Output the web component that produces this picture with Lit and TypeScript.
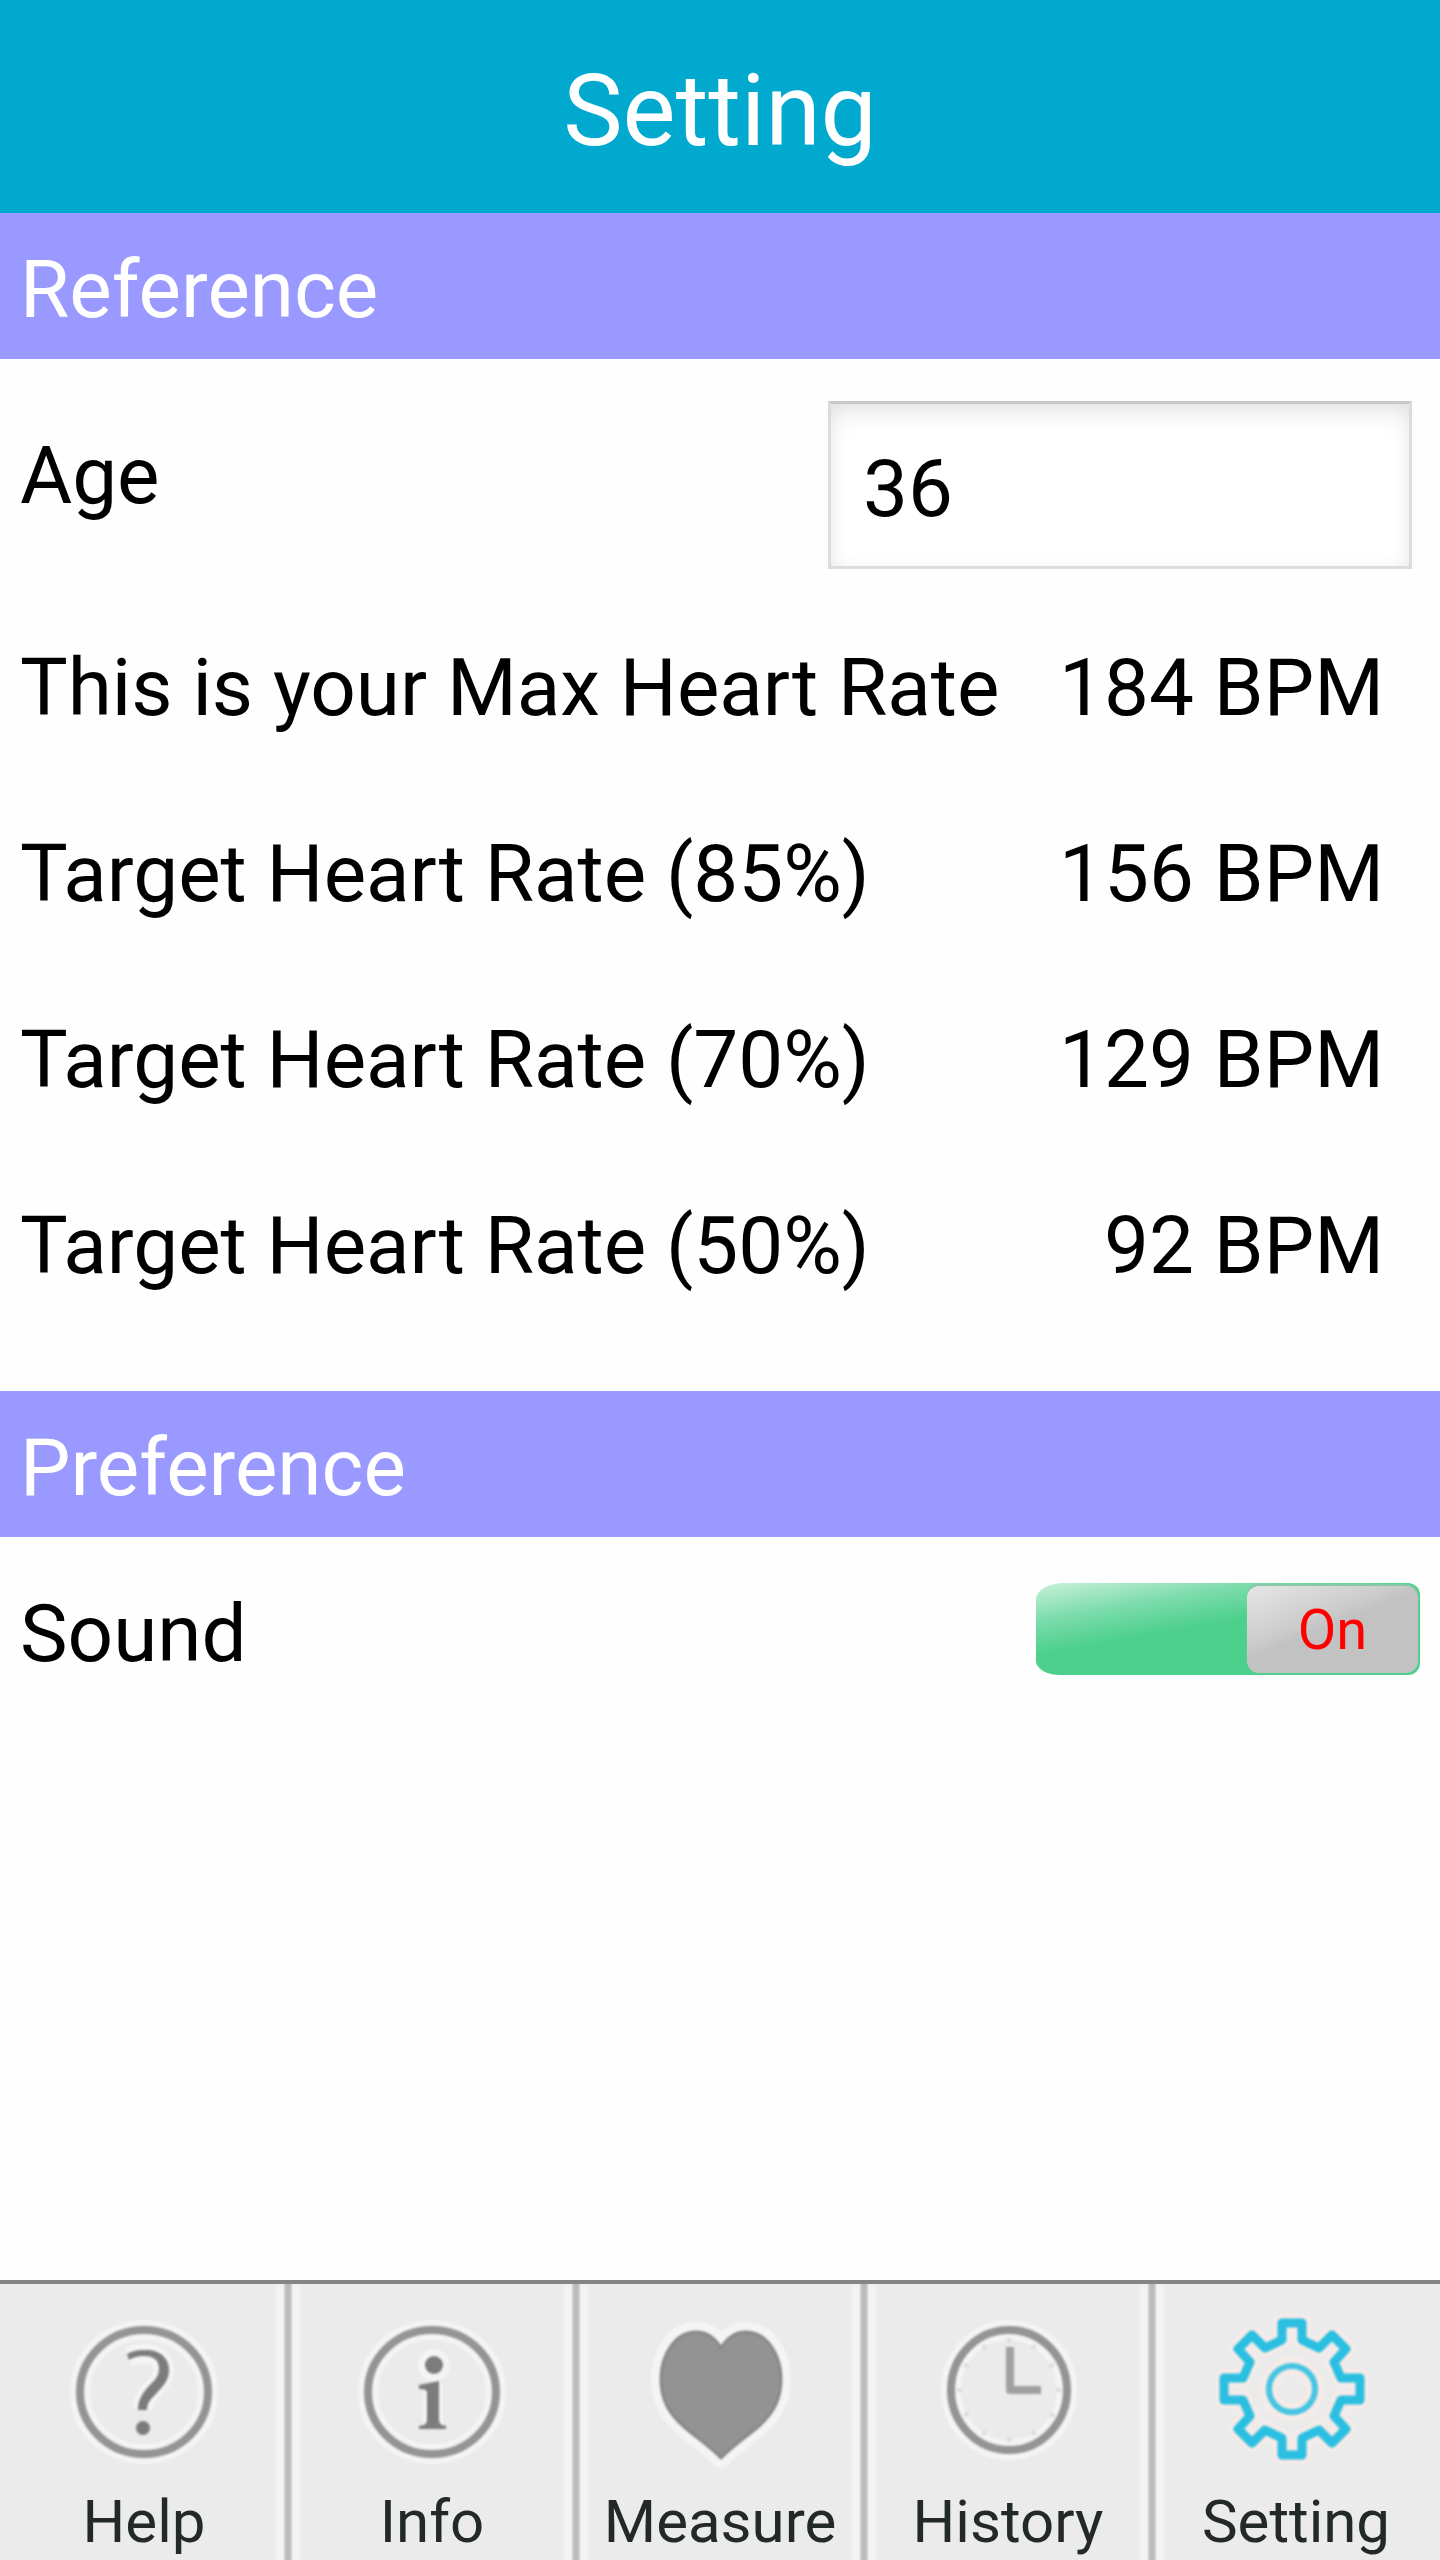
import { LitElement, html, svg, css } from "lit";
import { customElement, property, state } from "lit/decorators.js";
import { classMap } from "lit/directives/class-map.js";

type IconName = "help" | "info" | "measure" | "history" | "setting";

const GEAR =
  "M-10-66H10V-49L27-41L40-54L54-40L42-27L49-11H68V11H49L42 27L54 40L40 54L27 41L10 49V66H-10V49L-27 41L-40 54L-54 40L-42 27L-49 11H-68V-11H-49L-42-27L-54-40L-40-54L-27-41L-10-49Z";
const HEART =
  "M145 68C139 58 131 52 120 52C99 52 85 75 85 99C85 119 92 132 107 146C121 158 135 167 145 178C155 167 169 158 183 146C198 132 205 119 205 99C205 75 191 52 170 52C159 52 151 58 145 68Z";

const TICKS = [0, 30, 60, 90, 120, 150, 180, 210, 240, 270, 300, 330];

const icons = {
  help: svg`
    <ellipse class="halo" cx="144" cy="112" rx="64" ry="62"/>
    <ellipse class="ring" cx="144" cy="112" rx="64" ry="62"/>
    <path class="halo" d="M128 77C148 70 164 76 164 90C164 105 144 110 143 129"/>
    <path class="solid" d="M127 74C134 70 140 70 146 70C160 70 169 78 169 90C169 101 162 107 155 115C149 121 147 124 147 130H138C138 121 141 115 148 107C155 100 159 97 159 88C159 79 152 76 144 76C138 76 134 77 129 80Z"/>
    <circle class="solid" cx="143" cy="148" r="7"/>`,
  info: svg`
    <ellipse class="halo" cx="144" cy="112" rx="64" ry="62"/>
    <ellipse class="ring" cx="144" cy="112" rx="64" ry="62"/>
    <circle class="halo" cx="146" cy="85" r="6"/>
    <circle class="solid" cx="146" cy="85" r="9"/>
    <path class="halo" d="M145 104V146"/>
    <path class="solid" d="M131 105L151 101V139C151 144 153 145 158 146V149H131V146C137 145 139 144 139 139V113C139 110 137 109 131 109Z"/>`,
  measure: svg`
    <path class="halo" d=${HEART}/>
    <path class="heart" d=${HEART}/>`,
  history: svg`
    <ellipse class="halo" cx="145" cy="110" rx="58" ry="60"/>
    <ellipse class="ring" cx="145" cy="110" rx="58" ry="60"/>
    ${TICKS.map(
      (a) => svg`<path class="tick" d="M145 58V63" transform="rotate(${a} 145 110)"/>`
    )}
    <path class="hands" d="M146 67V110H177"/>`,
  setting: svg`
    <g transform="translate(140 109)">
      <path class="glow" d=${GEAR}/>
      <circle class="glow" r="23"/>
      <path class="gear" d=${GEAR}/>
      <circle class="hub" r="23"/>
    </g>`,
};

@customElement("tab-icon")
export class TabIcon extends LitElement {
  @property() name: IconName = "help";

  static styles = css`
    :host {
      display: block;
    }
    .icon {
      display: block;
      width: 180px;
      height: 180px;
      overflow: visible;
    }
    .art {
      filter: blur(1px);
      fill: none;
      stroke-linejoin: round;
    }
    .halo {
      stroke: #f4f4f4;
      stroke-width: 20;
    }
    .ring {
      stroke: #949494;
      stroke-width: 8;
    }
    .solid {
      fill: #7c7c7c;
    }
    .heart {
      fill: #939393;
      stroke: #888888;
      stroke-width: 3;
    }
    .hands {
      stroke: #a0a0a0;
      stroke-width: 8;
    }
    .tick {
      stroke: #dcdcdc;
      stroke-width: 4;
    }
    .glow {
      stroke: #f5ebe8;
      stroke-width: 18;
    }
    .gear {
      stroke: #2abfe1;
      stroke-width: 9;
    }
    .hub {
      stroke: #45c5e2;
      stroke-width: 6;
    }
  `;

  render() {
    return html`<svg class="icon" viewBox="54 20 180 180" aria-hidden="true">
      <g class="art">${icons[this.name]}</g>
    </svg>`;
  }
}

@customElement("app-root")
export class AppRoot extends LitElement {
  @state() private age = "36";
  @state() private sound = true;
  @state() private tab: IconName = "setting";

  private tabs: { id: IconName; label: string }[] = [
    { id: "help", label: "Help" },
    { id: "info", label: "Info" },
    { id: "measure", label: "Measure" },
    { id: "history", label: "History" },
    { id: "setting", label: "Setting" },
  ];

  static styles = css`
    :host {
      display: flex;
      flex-direction: column;
      min-height: 100vh;
      background: #fefefe;
      color: #000000;
      font-family: Roboto, "Liberation Sans", sans-serif;
      font-size: 80px;
      line-height: 94px;
    }
    * {
      box-sizing: border-box;
    }
    .bar {
      padding: 52px 20px 43px;
      background: #01a9cf;
      color: #ffffff;
      text-align: center;
    }
    .title {
      margin: 0;
      font-size: 100px;
      font-weight: 400;
      line-height: 118px;
    }
    .content {
      flex: 1;
    }
    .section {
      margin: 0;
      padding: 30px 20px 22px;
      background: #9a99ff;
      color: #ffffff;
      font-size: 80px;
      font-weight: 400;
    }
    .age {
      display: flex;
      justify-content: space-between;
      align-items: flex-start;
      padding: 42px 28px 26px 20px;
    }
    .age-label {
      padding-top: 28px;
    }
    .age-input {
      width: 584px;
      height: 168px;
      margin: 0;
      padding: 8px 32px 0;
      border: 3px solid #dcdcdc;
      border-top-color: #c8c8c8;
      border-radius: 0;
      outline: none;
      background: #ffffff;
      box-shadow: inset 0 12px 24px -4px rgba(0, 0, 0, 0.1),
        inset 0 0 16px rgba(0, 0, 0, 0.04);
      color: #000000;
      font: inherit;
    }
    .rates {
      margin: 0;
      padding-bottom: 52px;
    }
    .rate {
      display: flex;
      justify-content: space-between;
      gap: 24px;
      padding: 46px 56px 46px 20px;
    }
    .value {
      margin: 0;
      white-space: nowrap;
    }
    .sound {
      display: flex;
      justify-content: space-between;
      align-items: flex-start;
      padding: 46px 20px;
    }
    .sound-label {
      padding-top: 4px;
    }
    .switch {
      display: flex;
      width: 384px;
      height: 92px;
      margin: 0;
      padding: 3px 2px 2px;
      border: 0;
      border-radius: 28px 12px 12px 24px / 16px 12px 12px 14px;
      background: linear-gradient(
        170deg,
        #c8f1db 0%,
        #7cdcab 24%,
        #4dd08c 45%,
        #4dd08c 100%
      );
      font: inherit;
      cursor: pointer;
    }
    .switch.on {
      justify-content: flex-end;
    }
    .thumb {
      width: 171px;
      border-radius: 12px;
      background: linear-gradient(
        158deg,
        #e6e6e6 0%,
        #cccccc 38%,
        #c2c2c2 47%,
        #c2c2c2 100%
      );
      box-shadow: 0 -2px 1px #8cc6ab;
      color: #ff0000;
      font-size: 56px;
      line-height: 88px;
      text-align: center;
    }
    .tabs {
      display: grid;
      grid-template-columns: repeat(5, 1fr);
      height: 280px;
      border-top: 4px solid #858585;
      background: #ebebeb;
    }
    .tab {
      display: flex;
      flex-direction: column;
      align-items: center;
      min-width: 0;
      padding: 16px 0 0;
      background: linear-gradient(
        to right,
        #bcbcbc 0 2px,
        #f3f3f3 5px 10px,
        #ebebeb 14px calc(100% - 14px),
        #f3f3f3 calc(100% - 10px) calc(100% - 5px),
        #bcbcbc calc(100% - 2px)
      );
      color: #232925;
      font-size: 60px;
      line-height: 70px;
      text-decoration: none;
    }
    .tab:first-child {
      background: linear-gradient(
        to right,
        #ebebeb calc(100% - 14px),
        #f3f3f3 calc(100% - 10px) calc(100% - 5px),
        #bcbcbc calc(100% - 2px)
      );
    }
    .tab:last-child {
      background: linear-gradient(
        to right,
        #bcbcbc 0 2px,
        #f3f3f3 5px 10px,
        #ebebeb 14px
      );
    }
    .tab-label {
      padding-top: 7px;
    }
  `;

  private rate(percent: number) {
    const max = 220 - (Number(this.age) || 0);
    return Math.round((max * percent) / 100);
  }

  private row(label: string, percent: number) {
    return html`<div class="rate">
      <dt>${label}</dt>
      <dd class="value">${this.rate(percent)} BPM</dd>
    </div>`;
  }

  render() {
    return html`
      <header class="bar"><h1 class="title">Setting</h1></header>
      <main class="content">
        <h2 class="section">Reference</h2>
        <div class="age">
          <label class="age-label" for="age">Age</label>
          <input
            id="age"
            class="age-input"
            type="text"
            inputmode="numeric"
            .value=${this.age}
            @input=${(e: Event) =>
              (this.age = (e.target as HTMLInputElement).value)}
          />
        </div>
        <dl class="rates">
          ${this.row("This is your Max Heart Rate", 100)}
          ${this.row("Target Heart Rate (85%)", 85)}
          ${this.row("Target Heart Rate (70%)", 70)}
          ${this.row("Target Heart Rate (50%)", 50)}
        </dl>
        <h2 class="section">Preference</h2>
        <div class="sound">
          <label class="sound-label" for="sound">Sound</label>
          <button
            id="sound"
            type="button"
            role="switch"
            aria-checked=${this.sound ? "true" : "false"}
            class=${classMap({ switch: true, on: this.sound })}
            @click=${() => (this.sound = !this.sound)}
          >
            <span class="thumb">${this.sound ? "On" : "Off"}</span>
          </button>
        </div>
      </main>
      <nav class="tabs">
        ${this.tabs.map(
          (t) => html`<a
            class="tab"
            href="#${t.id}"
            aria-current=${this.tab === t.id ? "page" : "false"}
            @click=${() => (this.tab = t.id)}
          >
            <tab-icon name=${t.id}></tab-icon>
            <span class="tab-label">${t.label}</span>
          </a>`
        )}
      </nav>
    `;
  }
}
